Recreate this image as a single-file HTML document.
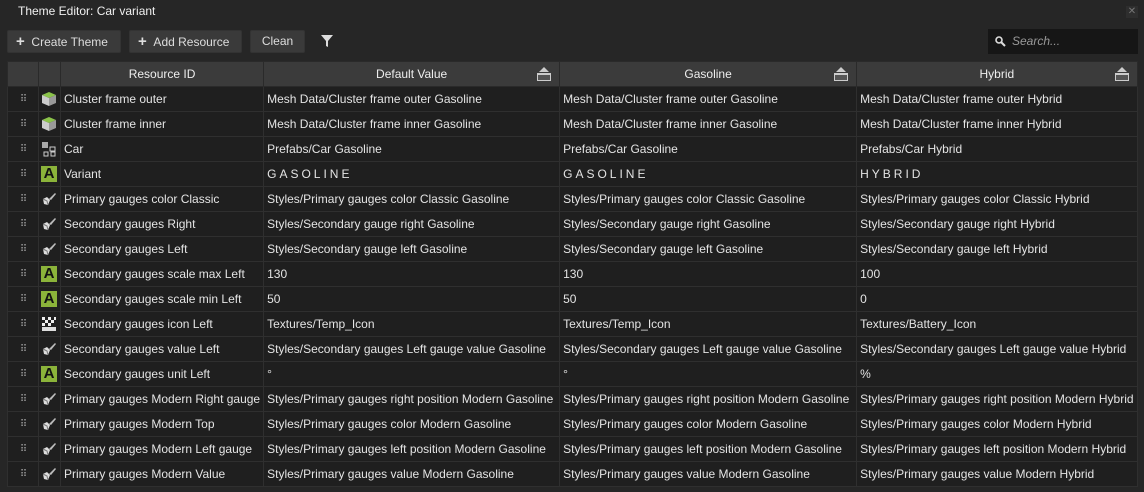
<!DOCTYPE html><html><head><style>
*{margin:0;padding:0;box-sizing:border-box}
body{width:1144px;height:492px;background:#262626;font-family:"Liberation Sans",sans-serif;font-size:12px;color:#e4e4e4;position:relative;overflow:hidden}
.title{position:absolute;left:18px;top:4px;font-size:12px;color:#f0f0f0}
.x{position:absolute;left:1126px;top:6px;width:12px;height:12px;background:#2e2e2e;color:#777;font-size:10px;text-align:center;line-height:12px}
.btn{position:absolute;top:30px;height:23px;background:#3a3a3a;border:1px solid #333;border-radius:2px;color:#ddd;line-height:21px;font-size:12px}
.search{position:absolute;left:988px;top:29px;width:150px;height:25px;background:#161616;color:#999;font-style:italic;line-height:25px;padding-left:24px}
table{position:absolute;left:7px;top:61px;border-collapse:collapse;table-layout:fixed;background:#1f1f1f}
td,th{border:1px solid #2f2f2f;height:25px;white-space:nowrap;overflow:hidden;padding:0 3px}
th{background:#3b3b3b;font-weight:normal;color:#eee;position:relative;border-color:#2a2a2a}
.d{color:#999;text-align:center;font-size:10px;letter-spacing:-1px}
.i{padding:0 2px}
.ic{display:inline-block;width:16px;height:16px;vertical-align:middle}
.A{background:#8bb33a;color:#111;font-weight:bold;font-size:15px;line-height:16px;text-align:center}
.up{position:absolute;right:8px;top:5px}
</style></head><body>
<div class="title">Theme Editor: Car variant</div>
<div class="x">✕</div>
<div class="btn" style="left:7px;width:114px;padding-left:8px"><b style="font-size:15px">+</b>&nbsp;&nbsp;Create Theme</div>
<div class="btn" style="left:129px;width:113px;padding-left:8px"><b style="font-size:15px">+</b>&nbsp;&nbsp;Add Resource</div>
<div class="btn" style="left:250px;width:55px;text-align:center">Clean</div>
<svg style="position:absolute;left:321px;top:35px" width="12" height="12"><path d="M0 0H12L7 6V12L5 11V6Z" fill="#ddd"/></svg>
<div class="search"><svg style="position:absolute;left:7px;top:7px" width="11" height="11"><circle cx="4" cy="4" r="3" stroke="#ddd" stroke-width="1.6" fill="none"/><path d="M6 6L10 10" stroke="#ddd" stroke-width="2"/></svg>Search...</div>
<table>
<colgroup><col style="width:31px"><col style="width:22px"><col style="width:201px"><col style="width:296px"><col style="width:297px"><col style="width:280px"></colgroup>
<tr><th></th><th></th><th>Resource ID</th><th>Default Value<svg class="up" width="14" height="14"><path d="M7 0L12 5H2Z" fill="#ccc"/><rect x="0" y="6" width="14" height="8" fill="#ccc"/><rect x="1" y="8" width="12" height="5" fill="#555"/></svg></th><th>Gasoline<svg class="up" width="14" height="14"><path d="M7 0L12 5H2Z" fill="#ccc"/><rect x="0" y="6" width="14" height="8" fill="#ccc"/><rect x="1" y="8" width="12" height="5" fill="#555"/></svg></th><th>Hybrid<svg class="up" width="14" height="14"><path d="M7 0L12 5H2Z" fill="#ccc"/><rect x="0" y="6" width="14" height="8" fill="#ccc"/><rect x="1" y="8" width="12" height="5" fill="#555"/></svg></th></tr>
<tbody id="b"></tbody>
</table>
<script>
const M='<svg class="ic" viewBox="0 0 16 16"><path d="M8 1L15 4L8 7L1 4Z" fill="#8bc34a"/><path d="M1 4L8 7V15L1 12Z" fill="#ccc"/><path d="M15 4L8 7V15L15 12Z" fill="#999"/></svg>';
const P='<svg class="ic" viewBox="0 0 16 16"><rect x="1" y="1" width="6" height="6" fill="#aaa"/><rect x="9" y="6" width="5" height="4" fill="none" stroke="#ccc"/><rect x="3" y="11" width="4" height="4" fill="none" stroke="#ccc"/><rect x="10" y="11" width="4" height="4" fill="none" stroke="#ccc"/></svg>';
const A='<span class="ic A">A</span>';
const S='<svg class="ic" viewBox="0 0 16 16"><path d="M2 8L6 6L9 9L7 14L3 13Z" fill="#ddd"/><path d="M8 8L14 2L15 3L10 9Z" fill="#bbb"/><path d="M2 8L6 10L7 14" stroke="#777" fill="none"/></svg>';
const T='<svg class="ic" viewBox="0 0 16 16"><path d="M1 1h3v3H1zM7 1h3v3H7zM4 4h3v3H4zM10 4h3v3h-3zM1 7h3v3H1zM7 7h3v3H7zM13 1h2v3h-2z" fill="#eee"/><rect x="1" y="11" width="14" height="4" fill="#ddd"/></svg>';
const g='<span style="letter-spacing:3px">';
const R=[[M,'Cluster frame outer','Mesh Data/Cluster frame outer Gasoline','Mesh Data/Cluster frame outer Gasoline','Mesh Data/Cluster frame outer Hybrid'],
[M,'Cluster frame inner','Mesh Data/Cluster frame inner Gasoline','Mesh Data/Cluster frame inner Gasoline','Mesh Data/Cluster frame inner Hybrid'],
[P,'Car','Prefabs/Car Gasoline','Prefabs/Car Gasoline','Prefabs/Car Hybrid'],
[A,'Variant',g+'GASOLINE</span>',g+'GASOLINE</span>',g+'HYBRID</span>'],
[S,'Primary gauges color Classic','Styles/Primary gauges color Classic Gasoline','Styles/Primary gauges color Classic Gasoline','Styles/Primary gauges color Classic Hybrid'],
[S,'Secondary gauges Right','Styles/Secondary gauge right Gasoline','Styles/Secondary gauge right Gasoline','Styles/Secondary gauge right Hybrid'],
[S,'Secondary gauges Left','Styles/Secondary gauge left Gasoline','Styles/Secondary gauge left Gasoline','Styles/Secondary gauge left Hybrid'],
[A,'Secondary gauges scale max Left','130','130','100'],
[A,'Secondary gauges scale min Left','50','50','0'],
[T,'Secondary gauges icon Left','Textures/Temp_Icon','Textures/Temp_Icon','Textures/Battery_Icon'],
[S,'Secondary gauges value Left','Styles/Secondary gauges Left gauge value Gasoline','Styles/Secondary gauges Left gauge value Gasoline','Styles/Secondary gauges Left gauge value Hybrid'],
[A,'Secondary gauges unit Left','°','°','%'],
[S,'Primary gauges Modern Right gauge','Styles/Primary gauges right position Modern Gasoline','Styles/Primary gauges right position Modern Gasoline','Styles/Primary gauges right position Modern Hybrid'],
[S,'Primary gauges Modern Top','Styles/Primary gauges color Modern Gasoline','Styles/Primary gauges color Modern Gasoline','Styles/Primary gauges color Modern Hybrid'],
[S,'Primary gauges Modern Left gauge','Styles/Primary gauges left position Modern Gasoline','Styles/Primary gauges left position Modern Gasoline','Styles/Primary gauges left position Modern Hybrid'],
[S,'Primary gauges Modern Value','Styles/Primary gauges value Modern Gasoline','Styles/Primary gauges value Modern Gasoline','Styles/Primary gauges value Modern Hybrid']];
document.getElementById('b').innerHTML=R.map(r=>'<tr><td class="d">⠿</td><td class="i">'+r[0]+'</td><td>'+r[1]+'</td><td>'+r[2]+'</td><td>'+r[3]+'</td><td>'+r[4]+'</td></tr>').join('');
</script>
</body></html>
